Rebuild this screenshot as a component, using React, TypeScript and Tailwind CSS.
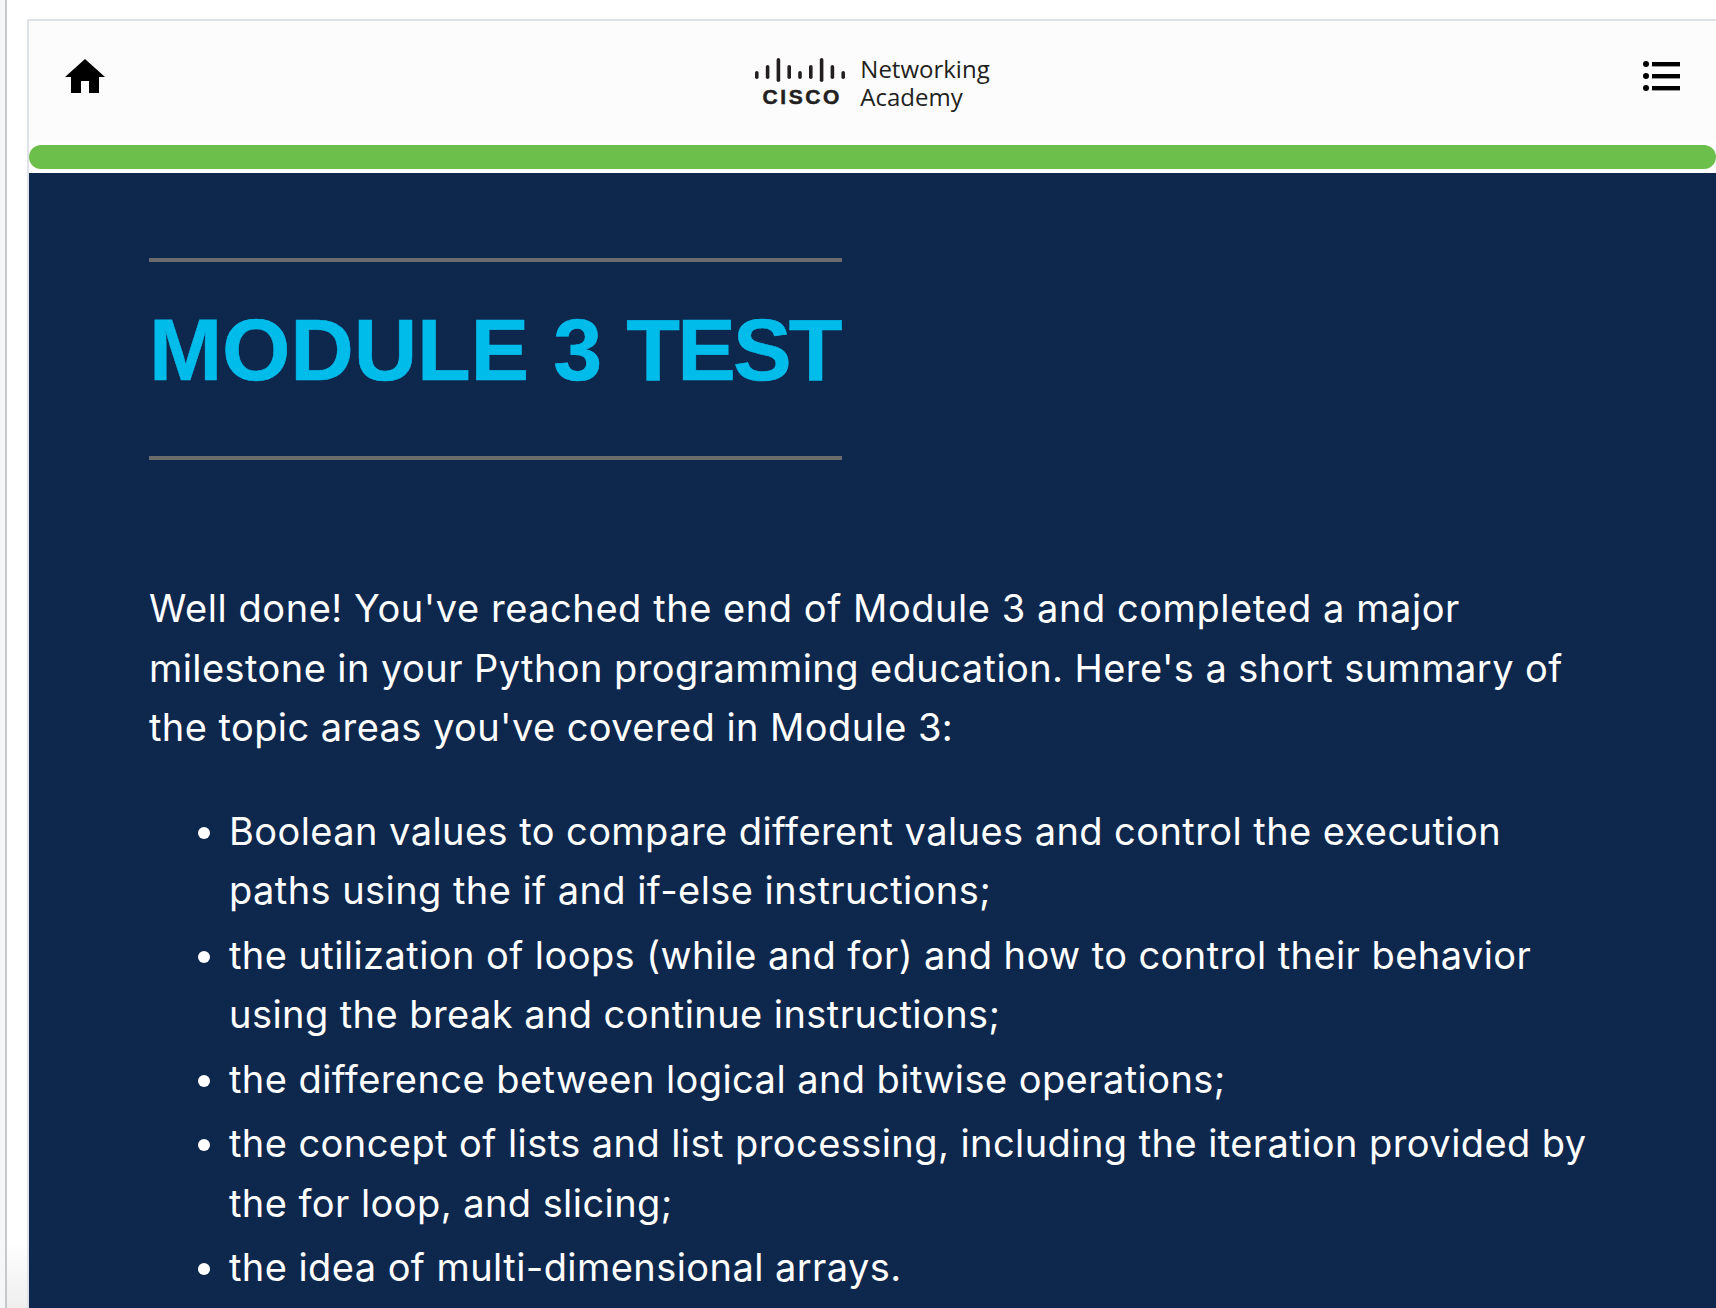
import React from 'react';

const inter = "font-['Inter',sans-serif]";

const items: string[][] = [
    ['Boolean values to compare different values and control the execution', 'paths using the if and if-else instructions;'],
    ['the utilization of loops (while and for) and how to control their behavior', 'using the break and continue instructions;'],
    ['the difference between logical and bitwise operations;'],
    ['the concept of lists and list processing, including the iteration provided by', 'the for loop, and slicing;'],
    ['the idea of multi-dimensional arrays.'],
];

function HomeIcon() {
    return (
        <svg width="40" height="34" viewBox="0 0 40 34" fill="#000">
            <path d="M20 0 L40 18 L34 18 L34 34 L24 34 L24 22 L16 22 L16 34 L6 34 L6 18 L0 18 Z" />
        </svg>
    );
}

function MenuIcon() {
    return (
        <svg width="37" height="30" viewBox="0 0 37 30" fill="#000">
            <circle cx="3" cy="3" r="3" />
            <circle cx="3" cy="15" r="3" />
            <circle cx="3" cy="27" r="3" />
            <rect x="9" y="1" width="28" height="4.4" />
            <rect x="9" y="13" width="28" height="4.4" />
            <rect x="9" y="25" width="28" height="4.4" />
        </svg>
    );
}

function CiscoBars() {
    const bars = [
        [0, 13, 8],
        [10.8, 7, 14],
        [21.6, 0, 24],
        [32.4, 7, 14],
        [43.2, 13, 8],
        [54, 7, 14],
        [64.8, 0, 24],
        [75.6, 7, 14],
        [86.4, 13, 8],
    ];
    return (
        <svg className="-ml-[3px]" width="90" height="24" viewBox="0 0 90 24" fill="#231f20">
            {bars.map(([x, y, h]) => (
                <rect key={x} x={x} y={y} width="3.6" height={h} rx="1.8" />
            ))}
        </svg>
    );
}

function Logo() {
    return (
        <div className="flex items-start gap-[15px] text-[#231f20]">
            <div className="flex flex-col items-center pt-[6px]">
                <CiscoBars />
                <span className="mt-[4px] pl-[1px] font-['Liberation_Sans',sans-serif] text-[21px] font-bold leading-[22px] tracking-[2.6px] [-webkit-text-stroke:0.5px_#231f20]">
                    CISCO
                </span>
            </div>
            <div className="pt-[3px] font-['Open_Sans',sans-serif] text-[24px] leading-[27.5px]">
                <div>Networking</div>
                <div>Academy</div>
            </div>
        </div>
    );
}

export default function App() {
    return (
        <div className="flex h-[1308px] w-[1716px] overflow-hidden bg-white">
            <div className="w-[5px] bg-[#f5f6f8]" />
            <div className="w-[2px] bg-[#c8c8c8]" />
            {/* gutter fades to grey at the very bottom */}
            <div className="w-[20px] bg-linear-to-b from-white from-[95%] to-[#eeeeee]" />

            <div className="mt-[19px] flex-1 border-l-2 border-t-2 border-[#dfe3e8]">
                {/* Header */}
                <header className="flex h-[120px] items-center justify-between bg-[#fcfcfc] px-[36px]">
                    <div className="mb-[10px]"><HomeIcon /></div>
                    <Logo />
                    <div className="mb-[10px]"><MenuIcon /></div>
                </header>

                {/* Progress */}
                <div className="py-[4px]">
                    <div className="h-[24px] rounded-[12px] bg-[#6cbf4b]" />
                </div>

                {/* Content */}
                <main className={`h-full bg-[#0e274d] px-[120px] pt-[85px] text-white ${inter}`}>
                    <h1 className="w-[693px] whitespace-nowrap border-y-4 border-[#6b6b6b] pb-[33px] pt-[15px] font-['Liberation_Sans',sans-serif] text-[88px] font-bold leading-[146px] tracking-[-0.2px] text-[#00bceb] [-webkit-text-stroke:0.6px_#00bceb]">
                        MODULE 3 <span className="tracking-[-2.9px]">TEST</span>
                    </h1>

                    <p className="mt-[119px] text-[38px] leading-[59.5px] tracking-[0.43px]">
                        <span className="tracking-[0.55px]">Well done! You've reached the end of Module 3 and completed a major</span>
                        <br />
                        milestone in your Python programming education. Here's a short summary of
                        <br />
                        the topic areas you've covered in Module 3:
                    </p>

                    <ul className="mt-[44px] list-disc pl-[80px] text-[38px] leading-[59.5px] tracking-[0.43px]">
                        {items.map((lines) => (
                            <li key={lines[0]} className="mb-[5px]">
                                {lines.map((l, i) => (
                                    <React.Fragment key={l}>
                                        {i > 0 && <br />}
                                        {l}
                                    </React.Fragment>
                                ))}
                            </li>
                        ))}
                    </ul>
                </main>
            </div>
        </div>
    );
}
